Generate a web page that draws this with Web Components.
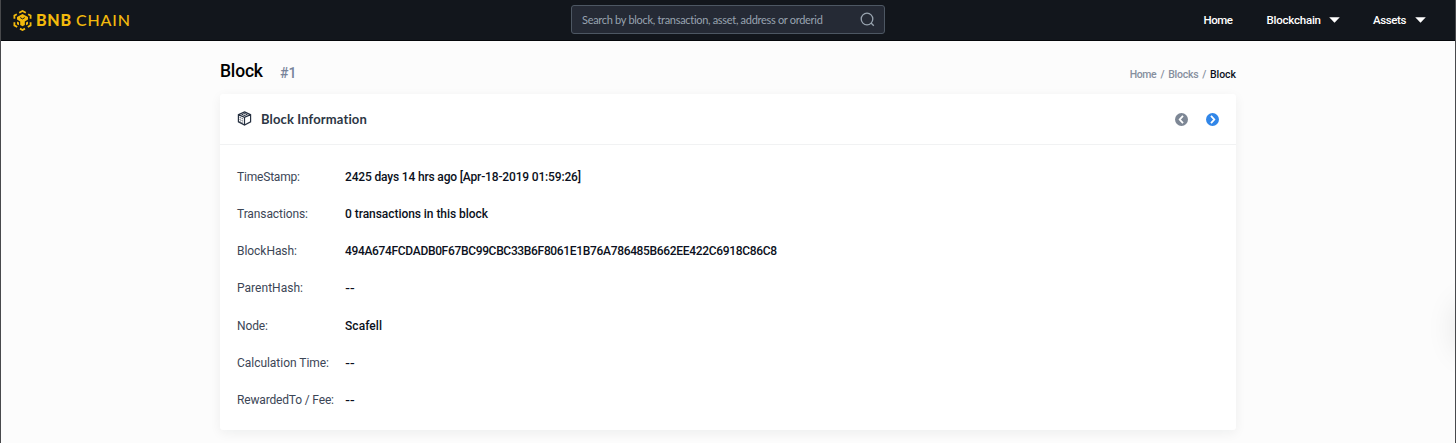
<!DOCTYPE html>
<html lang="en">
<head>
<meta charset="utf-8">
<title>Block #1</title>
<style>
html,body{margin:0;height:100%;overflow:hidden}
body{background:#fcfcfc}
</style>
</head>
<body>
<block-page></block-page>
<script>
const define = (name, html, setup) => {
  const t = document.createElement('template');
  t.innerHTML = html;
  customElements.define(name, class extends HTMLElement {
    connectedCallback() {
      if (this.shadowRoot) return;
      this.attachShadow({mode: 'open'}).append(t.content.cloneNode(true));
      if (setup) setup.call(this, this.shadowRoot);
    }
  });
};

/* Text tracked so that it fills the width given in w */
define('fit-text', `<style>
:host{display:block;flex:none;white-space:nowrap}
span{display:inline-block;white-space:pre}
</style><span><slot></slot></span>`, function (root) {
  const w = parseFloat(this.getAttribute('w'));
  const s = root.querySelector('span');
  const n = this.textContent.length;
  const natural = s.getBoundingClientRect().width;
  s.style.letterSpacing = ((w - natural) / Math.max(1, n - 1)) + 'px';
  this.style.width = w + 'px';
});

define('brand-logo', `<style>
:host{display:flex;align-items:center;color:#f3ba0c;font-family:Lato,sans-serif;font-size:16px;line-height:20px}
svg{display:block;margin-right:4px}
.b{font-weight:900;margin-right:5px}
</style>
<svg width="19" height="21" viewBox="0 0 19 21" fill="none" stroke="#f3ba0c" stroke-width="1.8">
<path d="M6.2 2.8 9.5 1 12.8 2.8M15.2 4.2 17.6 5.5V8.8M17.6 12.2V15.4L14.8 17M12 18.6 9.5 20 7 18.6M4.2 17 1.4 15.4V12.2M1.4 8.8V5.5L3.8 4.2"/>
<path d="M4 7 9.5 4.1 15 7V9.5L11.8 11.4V15L9.5 16.3 7.2 15V11.4L4 9.5Z" fill="#f3ba0c" stroke="none"/>
<path d="M4 11.4 6 12.5V15.3L4 14.2ZM15 11.4 13 12.5V15.3L15 14.2Z" fill="#f3ba0c" stroke="none"/>
<path d="M7.2 7.6 9.5 8.9 11.8 7.6" stroke="#12161c" stroke-width="1"/>
</svg>
<fit-text class="b" w="35">BNB</fit-text><fit-text w="54">CHAIN</fit-text>`);

define('search-box', `<style>
:host{box-sizing:border-box;width:314px;height:29px;border:1px solid #4d5763;border-radius:3px;background:#252a35;display:flex;align-items:center;padding:0 9.5px 0 10px;justify-content:space-between;color:#98a3b0;font:11px/16px Lato,sans-serif}
svg{display:block}
</style><fit-text w="241">Search by block, transaction, asset, address or orderid</fit-text>
<svg width="15" height="15" viewBox="0 0 15 15" fill="none" stroke="#98a3af" stroke-width="1.3"><circle cx="7" cy="7" r="5.8"/><path d="M11 11 13.8 13.8"/></svg>`);

define('nav-item', `<style>
:host{display:flex;align-items:center;gap:8px}
svg{display:none}
:host([menu]) svg{display:block}
</style><slot></slot><svg width="11" height="6" viewBox="0 0 11 6"><path d="M.2.2H10.8L5.5 5.8Z" fill="#fff"/></svg>`);

define('top-bar', `<style>
:host{box-sizing:border-box;display:flex;align-items:center;height:41px;background:#12161c;border-bottom:1px solid #05070b;padding:0 29.5px 0 12px;color:#fff;font:500 11.5px/16px Roboto,sans-serif}
brand-logo{width:558px;flex:none;height:39px}
search-box{flex:none;margin-top:-1px}
nav{margin-left:auto;display:flex}
nav-item+nav-item{margin-left:33px}
nav-item:nth-child(1){margin-right:-8px}
nav-item:nth-child(2){margin-left:41.5px}
</style>
<brand-logo></brand-logo><search-box></search-box>
<nav><nav-item><fit-text w="29.5">Home</fit-text></nav-item><nav-item menu><fit-text w="54.5">Blockchain</fit-text></nav-item><nav-item menu><fit-text w="33.5">Assets</fit-text></nav-item></nav>`);

define('page-title', `<style>
:host{display:flex;height:53px;align-items:flex-start;font-family:Roboto,sans-serif}
.t{font-size:17.5px;font-weight:500;line-height:20px;color:#000;margin-top:20px}
.n{font-size:14px;font-weight:500;line-height:20px;color:#77839a;margin:22px 0 0 17px}
nav{margin:26px 0 0 auto;display:flex;gap:3.7px;font-size:10.5px;font-weight:500;line-height:16px;color:#868f9e}
.c{color:#0d111c}
</style>
<fit-text class="t" w="43">Block</fit-text><fit-text class="n" w="16.5">#1</fit-text>
<nav><fit-text w="27">Home</fit-text><fit-text w="4">/</fit-text><fit-text w="30.5">Blocks</fit-text><fit-text w="4">/</fit-text><fit-text class="c" w="26">Block</fit-text></nav>`);

define('pager-button', `<style>
:host{display:block;color:#7d8795}
:host([next]){color:#3186e8}
:host([next]) path{transform:scaleX(-1);transform-origin:center}
svg{display:block}
</style><svg width="13" height="13" viewBox="0 0 13 13"><circle cx="6.5" cy="6.5" r="6.5" fill="currentColor"/><path d="M8 2.8 4.7 6.5 8 10.2" fill="none" stroke="#fff" stroke-width="1.8"/></svg>`);

define('card-header', `<style>
:host{box-sizing:border-box;display:flex;align-items:center;height:51px;border-bottom:1px solid #f1f2f3;padding:0 17px;color:#2c3644;font:700 13px/18px Lato,sans-serif}
svg{display:block}
.i{margin:-1px 9px 0 0}
.p{margin-left:auto;display:flex;gap:18px}
</style>
<svg class="i" width="15" height="15" viewBox="0 0 15 15" fill="none" stroke="#273141" stroke-width="1.2">
<path d="M7.5.9 13.6 3.6V10.8L7.5 14 1.4 10.8V3.6ZM1.4 3.6 7.5 6.4 13.6 3.6M7.5 6.4V14"/>
<path d="M4 3.4 7.5 1.8 11 3.4 7.5 5Z" fill="#273141" stroke="none"/><path d="M6.1 3.3H8.9" stroke="#fff" stroke-width=".9"/>
<path d="M2.6 6.3 5.9 7.9M2.6 8.5 5.9 10.1M2.6 10.6 5.9 12.2" stroke-dasharray="1.4 .8" stroke-width=".9"/></svg>
<fit-text w="106">Block Information</fit-text>
<div class="p"><pager-button></pager-button><pager-button next></pager-button></div>`);

define('info-row', `<style>
:host{display:grid;grid-template-columns:108px 1fr;align-items:center;height:37.2px;font:12px/16px Roboto,sans-serif}
.l{color:#3c4656}
.v{color:#0b1020;font-weight:500}
:host([empty]) .v{font:600 11px/16px Inter,sans-serif}
</style><div class="l"><slot name="label"></slot></div><div class="v"><slot></slot></div>`);

define('info-card', `<style>
:host{display:block;height:336px;background:#fff;border-radius:3px;box-shadow:0 3px 12px rgba(20,40,40,.06)}
.rows{padding:13.2px 17px 0}
</style><card-header></card-header><div class="rows"><slot></slot></div>`);

define('block-page', `<style>
:host{box-sizing:border-box;display:block;position:relative;height:443px;border:solid #48494c;border-width:0 1px;overflow:hidden;background:#fcfcfc}
main{width:1016px;margin-left:219px}
.glow{position:absolute;right:-34px;top:305px;width:28px;height:46px;border-radius:14px;box-shadow:0 0 34px 1px rgba(0,0,0,.14)}
</style>
<top-bar></top-bar>
<main><page-title></page-title>
<info-card>
<info-row><fit-text slot="label" w="63">TimeStamp:</fit-text><fit-text w="236">2425 days 14 hrs ago [Apr-18-2019 01:59:26]</fit-text></info-row>
<info-row><fit-text slot="label" w="71">Transactions:</fit-text><fit-text w="143">0 transactions in this block</fit-text></info-row>
<info-row><fit-text slot="label" w="60">BlockHash:</fit-text><fit-text w="432">494A674FCDADB0F67BC99CBC33B6F8061E1B76A786485B662EE422C6918C86C8</fit-text></info-row>
<info-row empty><fit-text slot="label" w="66">ParentHash:</fit-text><fit-text w="10">--</fit-text></info-row>
<info-row><fit-text slot="label" w="31">Node:</fit-text><fit-text w="37">Scafell</fit-text></info-row>
<info-row empty><fit-text slot="label" w="92">Calculation Time:</fit-text><fit-text w="10">--</fit-text></info-row>
<info-row empty><fit-text slot="label" w="97">RewardedTo / Fee:</fit-text><fit-text w="10">--</fit-text></info-row>
</info-card></main>
<div class="glow"></div>`);
</script>
</body>
</html>
